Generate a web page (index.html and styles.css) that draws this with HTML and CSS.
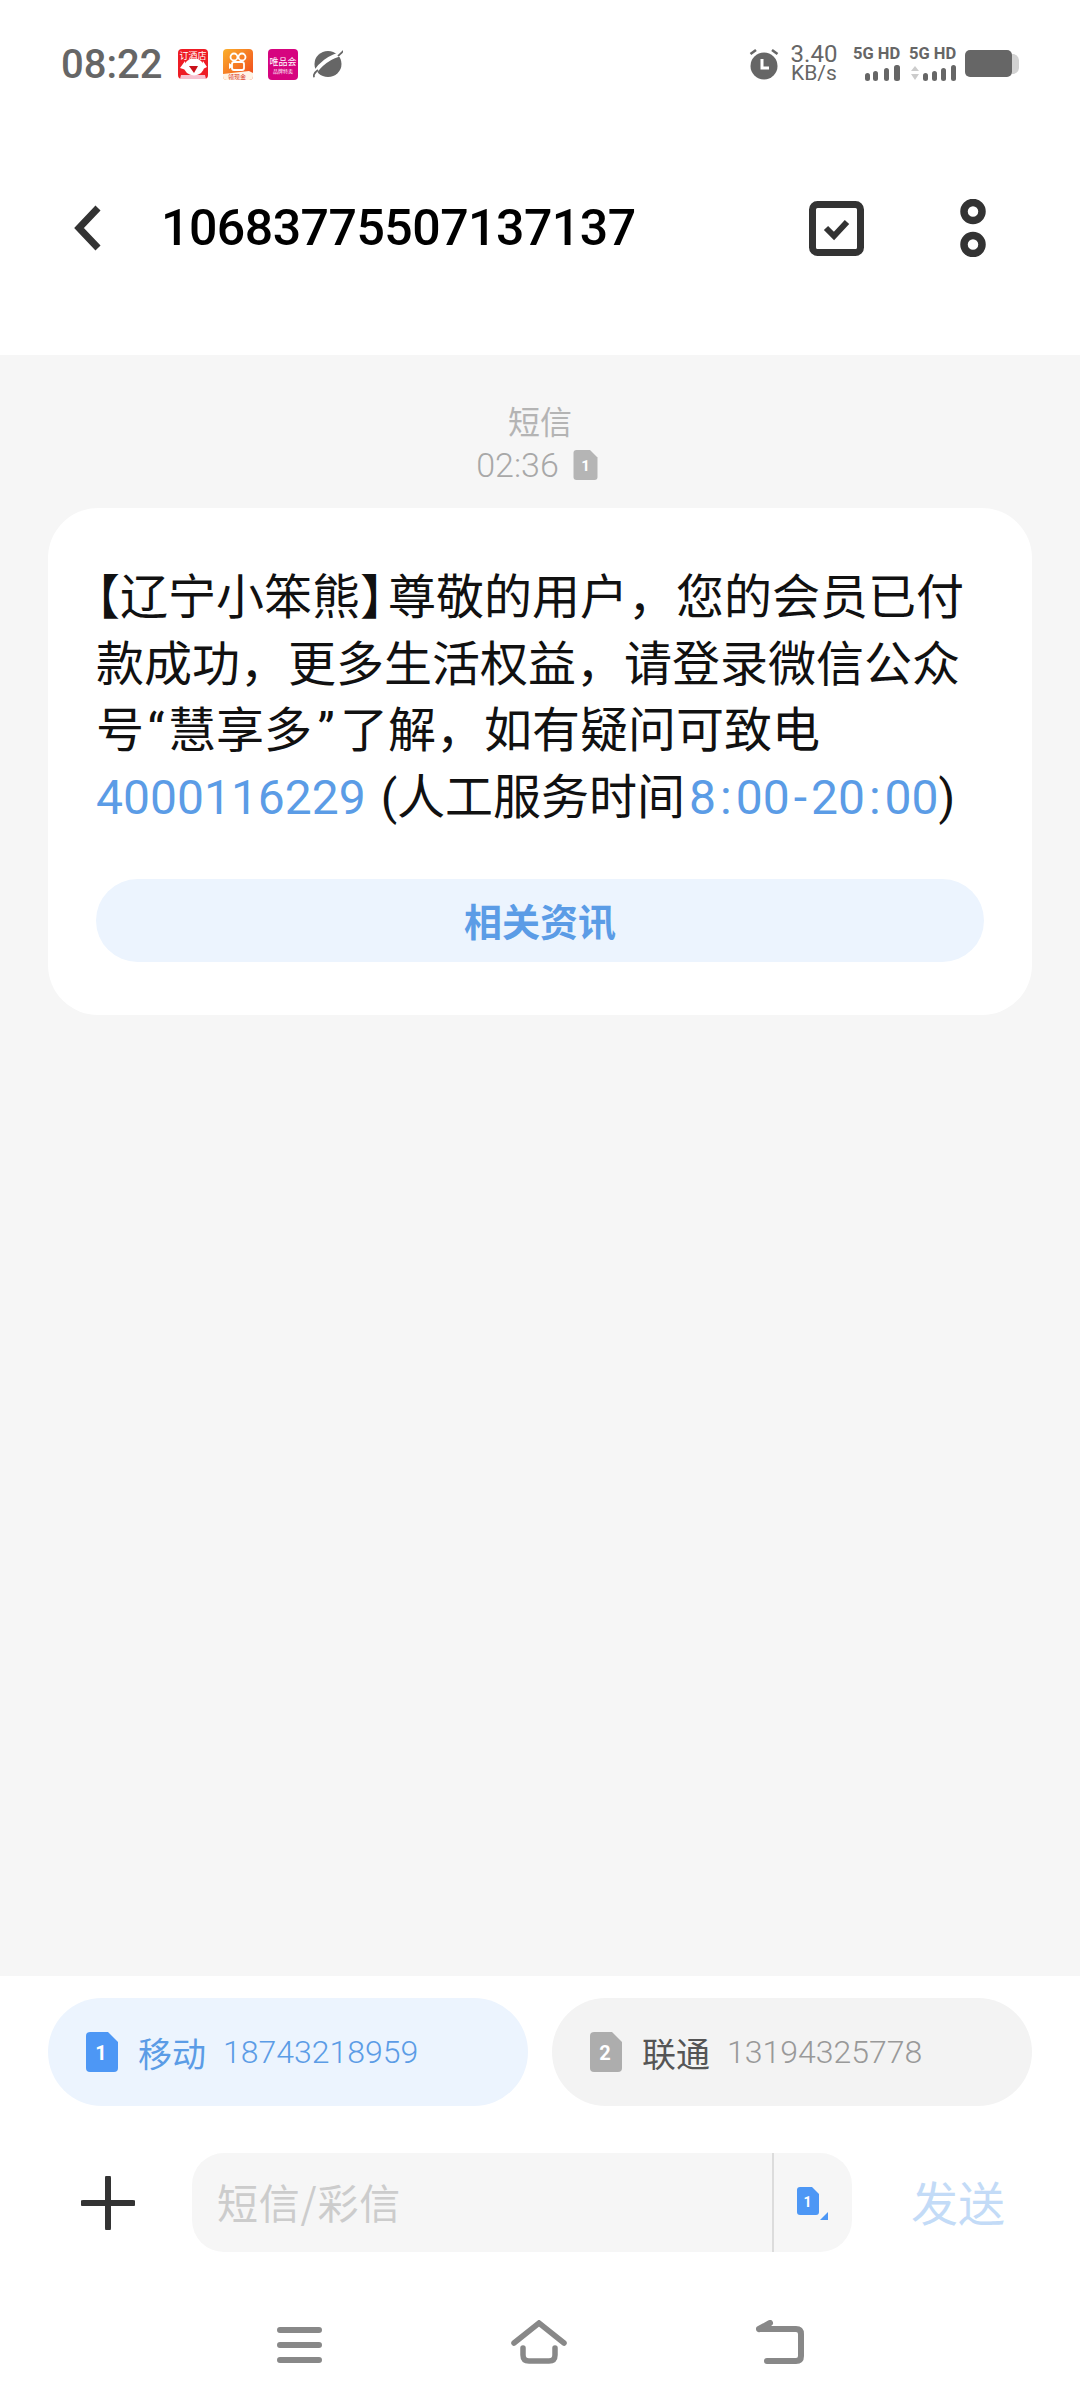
FILE: index.html
```html
<!DOCTYPE html>
<html lang="zh-CN">

<head>
    <meta charset="utf-8">
    <title>短信</title>
    <link rel="stylesheet" href="styles.css">
</head>

<body>
    <header class="top">
        <div class="status">
            <div class="status-left">
                <span class="clock">08:22</span>
                <div class="app-icons">
                    <svg class="app" width="30" height="30" viewBox="0 0 30 30">
                        <rect width="30" height="30" rx="4" fill="#ee1c25"/>
                        <path d="M2 30 L3 26 H27 L28 30 Z" fill="#f7c0cf"/>
                        <ellipse cx="16" cy="18" rx="10" ry="8.5" fill="#fff"/>
                        <path d="M7 12 L2 19 L8 21 Z M25 12 L29 18 L23 21 Z" fill="#fff"/>
                        <path d="M11 17 H20 L16 24 Z" fill="#c9111a"/>
                        <text x="15" y="10" class="app-text" font-size="9" fill="#fff">订酒店</text>
                    </svg>
                    <svg class="app" width="30" height="31" viewBox="0 0 30 31">
                        <defs>
                            <linearGradient id="ks" x1="0" y1="0" x2="1" y2="1">
                                <stop offset="0" stop-color="#fbb02c"/>
                                <stop offset="1" stop-color="#f0431c"/>
                            </linearGradient>
                        </defs>
                        <rect width="30" height="31" rx="4" fill="url(#ks)"/>
                        <circle cx="11" cy="8" r="3.5" fill="none" stroke="#fff" stroke-width="1.8"/>
                        <circle cx="19" cy="8" r="3.5" fill="none" stroke="#fff" stroke-width="1.8"/>
                        <rect x="9" y="13" width="12" height="8" rx="2" fill="none" stroke="#fff" stroke-width="1.8"/>
                        <path d="M9 16 L6 14 V20 L9 18" fill="#fff"/>
                        <path d="M0 25 L26 22 L30 24 V27 a4 4 0 0 1 -4 4 H4 a4 4 0 0 1 -4 -4 Z" fill="#fff4e6"/>
                        <text x="14" y="30" class="app-text" font-size="6" fill="#d9361c">领现金</text>
                    </svg>
                    <svg class="app" width="30" height="31" viewBox="0 0 30 31">
                        <rect width="30" height="31" rx="4" fill="#d6047f"/>
                        <text x="15" y="16" class="app-text" font-size="9" fill="#fff">唯品会</text>
                        <text x="15" y="24" class="app-text" font-size="5" fill="#fff">品牌特卖</text>
                    </svg>
                    <svg class="app" width="30" height="28" viewBox="0 0 30 28">
                        <ellipse cx="15" cy="14" rx="13.5" ry="13" fill="#666"/>
                        <path d="M1 24 C6 15 17 6 29 4" fill="none" stroke="#fff" stroke-width="4"/>
                        <path d="M5 20 C1 23 0 26 1.5 27 M25 6 C28 3 30 2 29 1" fill="none" stroke="#666" stroke-width="1.8"/>
                    </svg>
                </div>
            </div>
            <div class="status-right">
                <svg width="30" height="32" viewBox="0 0 30 32">
                    <circle cx="15" cy="18" r="13.5" fill="#666"/>
                    <path d="M1.5 6 L7 2 M28.5 6 L23 2" stroke="#666" stroke-width="2.6"/>
                    <path d="M13 11 V20 H20" fill="none" stroke="#fff" stroke-width="3"/>
                </svg>
                <div class="speed">
                    <span class="speed-num">3.40</span>
                    <span class="speed-unit">KB/s</span>
                </div>
                <div class="sim-signal">
                    <span class="net">5G HD</span>
                    <svg width="48" height="17" viewBox="0 0 48 17">
                        <rect x="12" y="8" width="5" height="8" rx="2.5" fill="#666"/>
                        <rect x="20" y="6" width="5" height="10" rx="2.5" fill="#666"/>
                        <rect x="31" y="3" width="5" height="13" rx="2.5" fill="#666"/>
                        <rect x="41" y="0" width="6" height="16" rx="2.5" fill="#666"/>
                    </svg>
                </div>
                <div class="sim-signal">
                    <span class="net">5G HD</span>
                    <svg width="48" height="17" viewBox="0 0 48 17">
                        <path d="M2 6 L6 1 L10 6 Z M2 9 L10 9 L6 15 Z" fill="#ccc"/>
                        <rect x="14" y="8" width="5" height="8" rx="2.5" fill="#666"/>
                        <rect x="23" y="6" width="5" height="10" rx="2.5" fill="#666"/>
                        <rect x="32" y="3" width="5" height="13" rx="2.5" fill="#666"/>
                        <rect x="42" y="0" width="5" height="16" rx="2.5" fill="#666"/>
                    </svg>
                </div>
                <svg width="54" height="28" viewBox="0 0 54 28">
                    <path d="M47 4 H49 Q54 6 54 10 V18 Q54 22 49 24 H47 Z" fill="#d2d2d2"/>
                    <rect x="0" y="0" width="47" height="27" rx="5" fill="#666"/>
                </svg>
            </div>
        </div>
        <div class="toolbar">
            <svg class="back" width="27" height="46" viewBox="0 0 27 46">
                <path d="M24 3 L5 23 L24 43" fill="none" stroke="#333" stroke-width="7"/>
            </svg>
            <h1 class="number">10683775507137137</h1>
            <svg width="55" height="55" viewBox="0 0 55 55">
                <rect x="3.5" y="3.5" width="48" height="48" rx="5" fill="none" stroke="#333" stroke-width="7"/>
                <path d="M17 27 L25 35 L38 21" fill="none" stroke="#333" stroke-width="6"/>
            </svg>
            <svg class="more" width="26" height="58" viewBox="0 0 26 58">
                <circle cx="13" cy="12.5" r="9" fill="none" stroke="#333" stroke-width="7.5"/>
                <circle cx="13" cy="45.5" r="9" fill="none" stroke="#333" stroke-width="7.5"/>
            </svg>
        </div>
    </header>

    <main class="messages">
        <p class="msg-type">短信</p>
        <div class="msg-meta">
            <span class="msg-time">02:36</span>
            <svg width="25" height="30" viewBox="0 0 32 40">
                <path d="M4 0 H22 L32 10 V36 a4 4 0 0 1 -4 4 H4 a4 4 0 0 1 -4 -4 V4 a4 4 0 0 1 4 -4 Z" fill="#b5b5b5"/>
                <text x="16" y="28" class="sim-num" font-size="20">1</text>
            </svg>
        </div>
        <article class="bubble">
            <p class="bubble-text"><span class="half">【</span>辽宁小笨熊<span class="half half-end">】</span>尊敬的用户，您的会员已付款成功，更多生活权益，请登录微信公众号<span class="quote">“</span>慧享多<span class="quote quote-end">”</span>了解，如有疑问可致电 <a class="link">4000116229</a> (人工服务时间<a class="link link-time">8<span class="sep">:</span>00<span class="sep">-</span>20<span class="sep">:</span>00</a>)</p>
            <button class="bubble-btn" type="button">相关资讯</button>
        </article>
    </main>

    <footer class="bottom">
        <div class="sims">
            <div class="sim-chip sim-active">
                <svg width="32" height="40" viewBox="0 0 32 40">
                    <path d="M4 0 H22 L32 10 V36 a4 4 0 0 1 -4 4 H4 a4 4 0 0 1 -4 -4 V4 a4 4 0 0 1 4 -4 Z" fill="#4d97f5"/>
                    <text x="15" y="28" class="sim-num" font-size="20">1</text>
                </svg>
                <span class="sim-name">移动</span>
                <span class="sim-phone">18743218959</span>
            </div>
            <div class="sim-chip">
                <svg width="32" height="40" viewBox="0 0 32 40">
                    <path d="M4 0 H22 L32 10 V36 a4 4 0 0 1 -4 4 H4 a4 4 0 0 1 -4 -4 V4 a4 4 0 0 1 4 -4 Z" fill="#adadad"/>
                    <text x="15" y="28" class="sim-num" font-size="20">2</text>
                </svg>
                <span class="sim-name">联通</span>
                <span class="sim-phone">13194325778</span>
            </div>
        </div>
        <div class="composer">
            <svg width="54" height="54" viewBox="0 0 54 54">
                <path d="M27 2 V52 M2 27 H52" stroke="#333" stroke-width="6" stroke-linecap="round"/>
            </svg>
            <div class="input">
                <span class="placeholder">短信/彩信</span>
                <div class="input-sim">
                    <svg width="32" height="36" viewBox="0 0 32 36">
                        <path d="M3 0 H15 L22 7 V25 a3 3 0 0 1 -3 3 H3 a3 3 0 0 1 -3 -3 V3 a3 3 0 0 1 3 -3 Z" fill="#4d97f5"/>
                        <text x="10.5" y="20" class="sim-num" font-size="14">1</text>
                        <path d="M31 25 V33 H23 Z" fill="#4d97f5"/>
                    </svg>
                </div>
            </div>
            <span class="send">发送</span>
        </div>
        <nav class="nav">
            <svg width="45" height="44" viewBox="0 0 45 44">
                <path d="M3 10 H42 M3 25 H42 M3 40 H42" stroke="#888" stroke-width="6" stroke-linecap="round"/>
            </svg>
            <svg width="56" height="44" viewBox="0 0 56 44">
                <path d="M3 23 L28 3 L53 23" fill="none" stroke="#888" stroke-width="5.5" stroke-linecap="round"/>
                <path d="M12 28 V35 Q12 41 18 41 H38 Q44 41 44 35 V28" fill="none" stroke="#888" stroke-width="5.5" stroke-linecap="round"/>
            </svg>
            <svg width="48" height="44" viewBox="0 0 48 44">
                <path d="M3 9 L14 3 M3 9 H40 Q45 9 45 14 V36 Q45 41 40 41 H11" fill="none" stroke="#888" stroke-width="6" stroke-linecap="round"/>
            </svg>
        </nav>
    </footer>
</body>

</html>
```

FILE: styles.css
```css
* {
    box-sizing: border-box;
}

html, body {
    margin: 0;
    padding: 0;
}

body {
    width: 1080px;
    height: 2408px;
    display: flex;
    flex-direction: column;
    background-color: #ffffff;
    font-family: Roboto, "Noto Sans CJK SC", sans-serif;
}

svg {
    display: block;
    flex-shrink: 0;
}

.top {
    height: 355px;
    background-color: #ffffff;
}

.status {
    height: 128px;
    padding: 0 61px;
    display: flex;
    align-items: center;
    justify-content: space-between;
}

.status-left, .status-right, .app-icons {
    display: flex;
    align-items: center;
}

.status-left {
    gap: 16px;
}

.app-icons {
    gap: 15px;
}

.clock {
    font-size: 40px;
    font-weight: 500;
    color: #666666;
}

.app-text {
    font-family: "Noto Sans CJK SC", sans-serif;
    text-anchor: middle;
}

.status-right {
    gap: 8px;
}

.speed {
    width: 48px;
    margin: 0 7px 0 3px;
    display: flex;
    flex-direction: column;
    align-items: center;
    color: #666666;
    line-height: 19px;
}

.speed-num {
    font-size: 24px;
}

.speed-unit {
    font-size: 21px;
}

.sim-signal {
    width: 48px;
    display: flex;
    flex-direction: column;
    gap: 3px;
}

.net {
    font-size: 16.5px;
    line-height: 16px;
    font-weight: 700;
    color: #666666;
    white-space: nowrap;
}

.toolbar {
    height: 200px;
    padding-left: 74px;
    display: flex;
    align-items: center;
}

.number {
    width: 648px;
    margin: 0 0 0 60px;
    font-size: 50px;
    font-weight: 500;
    color: #000000;
    letter-spacing: -0.5px;
}

.more {
    margin-left: 96px;
}

.messages {
    flex: 1;
    padding: 43px 48px 0;
    background-color: #f6f6f6;
}

.msg-type {
    margin: 0 0 2px;
    font-family: "Noto Sans CJK SC", sans-serif;
    font-size: 32px;
    line-height: 44px;
    text-align: center;
    color: #b4b4b4;
}

.msg-meta {
    height: 42px;
    padding-right: 6px;
    display: flex;
    align-items: center;
    justify-content: center;
    gap: 14px;
    margin-bottom: 22px;
}

.msg-time {
    font-size: 34px;
    font-weight: 300;
    color: #a8a8a8;
}

.bubble {
    padding: 57px 48px 53px;
    border-radius: 50px;
    background-color: #ffffff;
}

.bubble-text {
    margin: 0 0 48px;
    font-size: 48px;
    line-height: 66.6px;
    color: #111111;
    word-spacing: 3px;
}

.half {
    font-feature-settings: "halt";
}

.half-end {
    margin-right: 4px;
}

.quote {
    display: inline-block;
    width: 24px;
    text-align: center;
}

.quote-end {
    width: 28px;
}

.link {
    color: #5b9ce6;
}

.link-time {
    margin-left: 4px;
}

.sep {
    margin: 0 4px;
}

.bubble-btn {
    display: block;
    width: 100%;
    height: 83px;
    padding: 0 0 3px;
    border: 0;
    border-radius: 42px;
    background-color: #ecf4fe;
    font-family: "Noto Sans CJK SC", sans-serif;
    font-size: 38px;
    font-weight: 700;
    color: #5b9ce6;
}

.bottom {
    height: 432px;
    padding-top: 22px;
    background-color: #ffffff;
}

.sims {
    padding: 0 48px;
    display: flex;
    gap: 24px;
}

.sim-chip {
    width: 480px;
    height: 108px;
    padding-left: 38px;
    display: flex;
    align-items: center;
    border-radius: 54px;
    background-color: #f3f3f3;
}

.sim-active {
    background-color: #ecf4fe;
}

.sim-num {
    font-family: Roboto, sans-serif;
    font-weight: 700;
    fill: #ffffff;
    text-anchor: middle;
}

.sim-name {
    margin-left: 20px;
    font-size: 34px;
    color: #555555;
}

.sim-phone {
    margin-left: 17px;
    font-size: 32px;
    font-weight: 300;
    color: #999999;
}

.sim-active .sim-name, .sim-active .sim-phone {
    color: #5b9ce6;
}

.composer {
    margin-top: 47px;
    padding-left: 81px;
    display: flex;
    align-items: center;
}

.input {
    width: 660px;
    height: 99px;
    margin-left: 57px;
    padding-left: 25px;
    display: flex;
    align-items: center;
    justify-content: space-between;
    border-radius: 32px;
    background-color: #f6f6f6;
}

.placeholder {
    margin-bottom: 4px;
    font-family: "Noto Sans CJK SC", sans-serif;
    font-size: 41px;
    letter-spacing: 0.8px;
    color: #cccccc;
}

.input-sim {
    width: 80px;
    height: 99px;
    padding: 34px 0 0 23px;
    border-left: 2px solid #dcdcdc;
}

.send {
    margin: 0 0 4px 59px;
    font-family: "Noto Sans CJK SC", sans-serif;
    font-size: 47px;
    color: #c3dbf7;
}

.nav {
    margin-top: 68px;
    display: flex;
    justify-content: center;
    gap: 189px;
}
```
